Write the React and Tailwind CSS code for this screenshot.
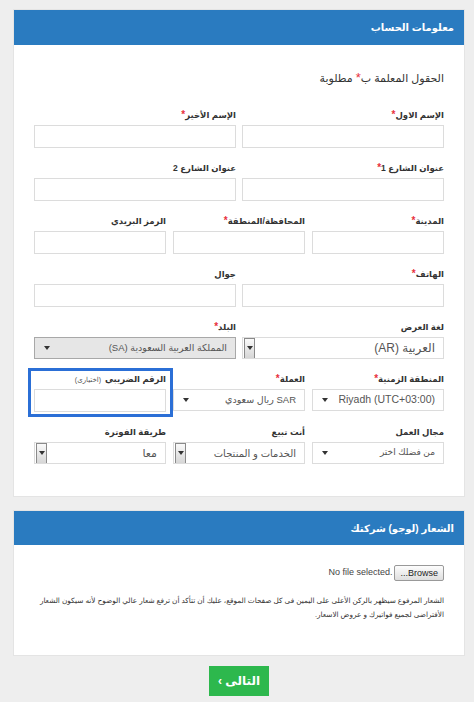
import React from 'react'

function Arrow({ className = '' }) {
  return (
    <svg width="6" height="4" viewBox="0 0 6 4" className={className}>
      <path d="M0 0 L6 0 L3 4 Z" fill="#333" />
    </svg>
  )
}

function Label({ text, required, extra }) {
  return (
    <div className="h-4 leading-4 text-[8.5px] font-bold text-[#333] mb-[2px] whitespace-nowrap">
      {text}
      {required && <span className="text-[#e8303c] text-[10px]">*</span>}
      {extra && <span className="font-normal text-[7px] text-[#555] mr-1">{extra}</span>}
    </div>
  )
}

function Input() {
  return <div className="h-[23px] bg-white border border-[#dcdcdc]" />
}

function Select({ value, variant = 'inline', size = 'text-[10px]' }) {
  if (variant === 'btn') {
    return (
      <div className="h-[22px] bg-white border border-[#dcdcdc] flex items-center overflow-hidden">
        <span className={`${size} text-[#555] pr-2 flex-1 whitespace-nowrap`}>{value}</span>
        <div className="h-[21px] w-[11px] ml-[1px] border border-[#8a8a8a] bg-gradient-to-b from-[#fafafa] to-[#d6d6d6] flex items-center justify-center shrink-0">
          <Arrow />
        </div>
      </div>
    )
  }
  const disabled = variant === 'disabled'
  return (
    <div
      className={`h-[22px] flex items-center border overflow-hidden ${
        disabled ? 'bg-[#e6e6e6] border-[#a8a8a8]' : 'bg-white border-[#dcdcdc]'
      }`}
    >
      <span className={`${size} text-[#555] pr-2 flex-1 whitespace-nowrap`}>{value}</span>
      <Arrow className="ml-[9px] shrink-0" />
    </div>
  )
}

function Field({ label, required, children, extra }) {
  return (
    <div>
      <Label text={label} required={required} extra={extra} />
      {children}
    </div>
  )
}

export default function App() {
  return (
    <div
      dir="rtl"
      className="min-h-[702px] bg-[#eeeeee] pl-[13px] pr-[9px] pt-[9px] pb-2 font-['Liberation_Sans','DejaVu_Sans',sans-serif] text-[#333]"
    >
      <div className="bg-white border border-[#e4e4e4]">
        <div className="h-[35px] bg-[#2a7bc0] flex items-center pr-[10px]">
          <h2 className="text-white text-[10px] font-bold">معلومات الحساب</h2>
        </div>
        <div className="px-[20px] pt-[25px] pb-[32px]">
          <p className="text-[11px] leading-4 mb-[21px]">
            الحقول المعلمة ب<span className="text-[#e8303c] text-[13px]">*</span> مطلوبة
          </p>

          <div className="flex flex-col gap-[12px]">
            <div className="grid grid-cols-2 gap-x-[6px]">
              <Field label="الإسم الاول" required>
                <Input />
              </Field>
              <Field label="الإسم الأخير" required>
                <Input />
              </Field>
            </div>

            <div className="grid grid-cols-2 gap-x-[6px]">
              <Field label="عنوان الشارع 1" required>
                <Input />
              </Field>
              <Field label="عنوان الشارع 2">
                <Input />
              </Field>
            </div>

            <div className="grid grid-cols-3 gap-x-[7px]">
              <Field label="المدينة" required>
                <Input />
              </Field>
              <Field label="المحافظة/المنطقة" required>
                <Input />
              </Field>
              <Field label="الرمز البريدي">
                <Input />
              </Field>
            </div>

            <div className="grid grid-cols-2 gap-x-[6px]">
              <Field label="الهاتف" required>
                <Input />
              </Field>
              <Field label="جوال">
                <Input />
              </Field>
            </div>

            <div className="grid grid-cols-2 gap-x-[6px]">
              <Field label="لغة العرض">
                <Select value="العربية (AR)" variant="btn" size="text-[12px]" />
              </Field>
              <Field label="البلد" required>
                <Select value="المملكة العربية السعودية (SA)" variant="disabled" size="text-[9.5px]" />
              </Field>
            </div>

            <div className="grid grid-cols-3 gap-x-[7px]">
              <Field label="المنطقة الزمنية" required>
                <Select value="Riyadh (UTC+03:00)" size="text-[10.5px]" />
              </Field>
              <Field label="العملة" required>
                <Select value="SAR ريال سعودي" size="text-[9.5px]" />
              </Field>
              <div className="relative">
                <Field label="الرقم الضريبي" extra="(اختيارى)">
                  <Input />
                </Field>
                <div className="absolute top-[-3px] bottom-[-5px] left-[-6px] right-[-7px] border-[3px] border-[#2b6fd6] pointer-events-none" />
              </div>
            </div>

            <div className="grid grid-cols-3 gap-x-[7px]">
              <Field label="مجال العمل">
                <Select value="من فضلك اختر" size="text-[9px]" />
              </Field>
              <Field label="أنت تبيع">
                <Select value="الخدمات و المنتجات" variant="btn" size="text-[10px]" />
              </Field>
              <Field label="طريقة الفوترة">
                <Select value="معا" variant="btn" size="text-[11px]" />
              </Field>
            </div>
          </div>
        </div>
      </div>

      <div className="mt-[13px] bg-white border border-[#e4e4e4]">
        <div className="h-[34px] bg-[#2a7bc0] flex items-center pr-[10px]">
          <h2 className="text-white text-[10px] font-bold">الشعار (لوجو) شركتك</h2>
        </div>
        <div className="px-[20px] pt-[20px] pb-[33px]">
          <div className="flex items-center gap-[2px] h-4">
            <button className="h-[16px] px-[5px] text-[9px] leading-none border border-[#999] rounded-[2px] bg-gradient-to-b from-[#fdfdfd] to-[#dedede] text-[#222]">
              Browse...
            </button>
            <span dir="ltr" className="text-[9px] text-[#444]">No file selected.</span>
          </div>
          <p className="mt-[13px] text-[7.3px] leading-[14px] text-[#333]">
            الشعار المرفوع سيظهر بالركن الأعلى على اليمين فى كل صفحات الموقع، عليك أن تتأكد أن ترفع شعار عالي الوضوح لأنه سيكون الشعار الأفتراضى لجميع فواتيرك و عروض الاسعار.
          </p>
        </div>
      </div>

      <div className="flex justify-center mt-[10px]">
        <button className="h-[30px] w-[60px] bg-[#2db84d] text-white text-[12px] font-bold">
          التالى ›
        </button>
      </div>
    </div>
  )
}
